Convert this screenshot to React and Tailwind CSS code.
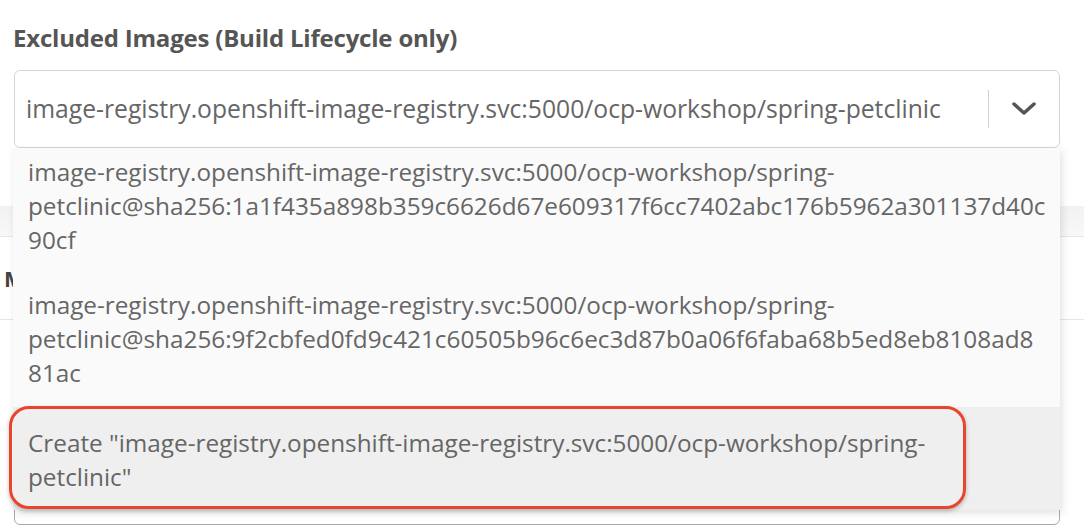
import React from "react";

const options = [
  {
    lines: [
      "image-registry.openshift-image-registry.svc:5000/ocp-workshop/spring-",
      "petclinic@sha256:1a1f435a898b359c6626d67e609317f6cc7402abc176b5962a301137d40c",
      "90cf",
    ],
    cls: "pt-[7px] pb-[16px]",
  },
  {
    lines: [
      "image-registry.openshift-image-registry.svc:5000/ocp-workshop/spring-",
      "petclinic@sha256:9f2cbfed0fd9c421c60505b96c6ec3d87b0a06f6faba68b5ed8eb8108ad8",
      "81ac",
    ],
    cls: "pt-[15px] pb-[17px]",
  },
];

export default function App() {
  return (
    <div className="relative w-[1084px] h-[528px] bg-white overflow-hidden font-['Open_Sans',sans-serif]">
      {/* field */}
      <div className="px-[14px] pt-[23px]">
        <label className="block -ml-px text-[24px] leading-[30px] font-bold text-[#555] tracking-[-0.2px]">
          Excluded Images (Build Lifecycle only)
        </label>
        <div className="mt-[17px] h-[78px] w-[1046px] rounded-[6px] border border-[#d6d6d6] bg-white flex items-center pl-[11px] pr-[22px]">
          <span className="flex-1 text-[24.7px] text-[#666] whitespace-nowrap overflow-hidden">
            image-registry.openshift-image-registry.svc:5000/ocp-workshop/spring-petclinic
          </span>
          <span className="w-px h-[38px] bg-[#cfcfcf] mr-[22px]" />
          <svg width="26" height="16" viewBox="0 0 26 16" className="text-[#555]">
            <path d="M3 3l10 9 10-9" fill="none" stroke="currentColor" strokeWidth="3.5" strokeLinecap="round" strokeLinejoin="round" />
          </svg>
        </div>
      </div>

      {/* content lying under the menu */}
      <div className="mt-[58px] h-[30px] bg-gradient-to-b from-[#f2f2f2] to-[#f8f8f8]" />
      <div className="border-t border-[#e6e6e6] h-[83px] flex items-center pl-[4px]">
        <span className="text-[22px] font-bold text-[#444]">M</span>
      </div>
      <div className="border-t border-[#e6e6e6]" />
      <div className="ml-[14px] mt-[50px] w-[1046px] h-[155px] rounded-[6px] border border-[#aaa]" />

      {/* open menu */}
      <div className="absolute left-[13px] top-[148px] w-[1047px] bg-[#fafafa] shadow-[2px_3px_8px_rgba(0,0,0,0.12)]">
        {options.map((o, i) => (
          <div key={i} className={`px-[15px] ${o.cls} text-[24.3px] leading-[34px] text-[#666] whitespace-nowrap`}>
            {o.lines.map((l) => (
              <div key={l}>{l}</div>
            ))}
          </div>
        ))}
        <div className="bg-[#efefef] px-[15px] pt-[19px] pb-[16px] text-[24.3px] leading-[34px] text-[#666] whitespace-nowrap">
          <div>Create "image-registry.openshift-image-registry.svc:5000/ocp-workshop/spring-</div>
          <div>petclinic"</div>
        </div>
      </div>

      {/* highlight annotation */}
      <div className="absolute left-[9px] top-[406px] w-[957px] h-[103px] rounded-[20px] border-[3px] border-[#e8452f] shadow-[0_2px_4px_rgba(0,0,0,0.25)] pointer-events-none" />
    </div>
  );
}
